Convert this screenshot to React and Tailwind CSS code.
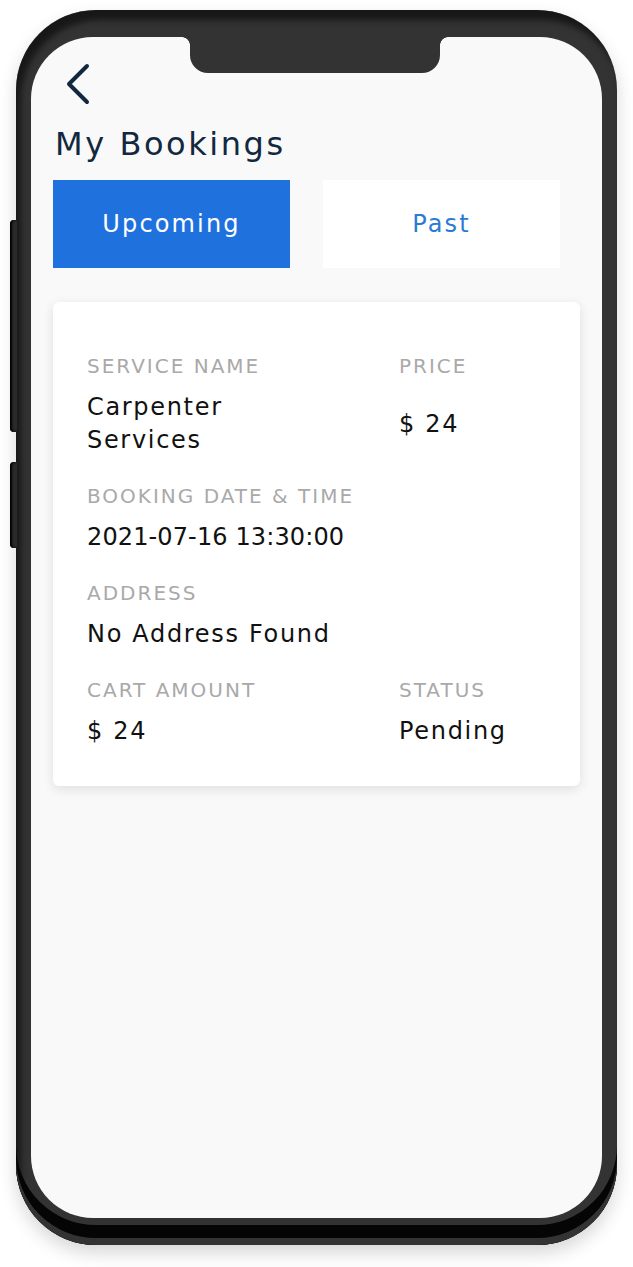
import { useState } from "react";

const font = { fontFamily: '"DejaVu Sans", "Liberation Sans", sans-serif' };

function BackIcon() {
  return (
    <svg width="26" height="42" viewBox="0 0 26 42" fill="none">
      <path
        d="M22 3 L4 21 L22 39"
        stroke="#12283f"
        strokeWidth="4"
        strokeLinecap="round"
        strokeLinejoin="round"
      />
    </svg>
  );
}

function Label({ children }) {
  return (
    <div className="text-[20px] leading-[24px] tracking-[0.1em] text-[#a9a9a9]">
      {children}
    </div>
  );
}

function Value({ children, className = "tracking-[0.07em]" }) {
  return (
    <div className={`mt-[13px] text-[24px] leading-[33px] text-[#111111] ${className}`}>
      {children}
    </div>
  );
}

export default function App() {
  const [tab, setTab] = useState("upcoming");

  const tabClass = (id) =>
    `w-[237px] h-[88px] text-[24px] tracking-[0.09em] ${
      tab === id ? "bg-[#1f72dd] text-white" : "bg-white text-[#2b7bd4]"
    }`;

  return (
    <div className="w-[633px] h-[1267px] bg-white pt-[10px] pl-[16px]" style={font}>
      <div className="relative w-[601px] h-[1235px] rounded-[80px] bg-[#333333] pt-[27px] px-[15px] shadow-[inset_0_-7px_0_#333333,inset_0_-20px_0_#050505,inset_5px_10px_6px_rgba(0,0,0,0.55),0_8px_18px_rgba(0,0,0,0.16)]">
        {/* side buttons */}
        <div className="absolute -left-[6px] top-[210px] w-[7px] h-[212px] rounded-l-[4px] bg-[#2a2a2a] shadow-[inset_2px_0_2px_#000]" />
        <div className="absolute -left-[6px] top-[452px] w-[7px] h-[86px] rounded-l-[4px] bg-[#2a2a2a] shadow-[inset_2px_0_2px_#000]" />

        <div className="relative w-[571px] h-[1181px] rounded-[62px] bg-[#f9f9f9] overflow-hidden">
          {/* notch */}
          <div className="absolute left-[159px] top-0 w-[250px] h-[36px] rounded-b-[18px] bg-[#333333]" />
          <div className="absolute left-[151px] top-0 w-[8px] h-[8px] bg-[radial-gradient(circle_at_0_100%,transparent_7.5px,#333333_8px)]" />
          <div className="absolute left-[409px] top-0 w-[8px] h-[8px] bg-[radial-gradient(circle_at_100%_100%,transparent_7.5px,#333333_8px)]" />

          <div className="pt-[26px] pl-[34px]">
            <button className="block">
              <BackIcon />
            </button>
          </div>

          <h1 className="mt-[19px] ml-[24px] text-[32px] leading-[40px] tracking-[0.08em] text-[#12283f]">
            My Bookings
          </h1>

          <div className="mt-[16px] ml-[22px] flex gap-[33px]">
            <button onClick={() => setTab("upcoming")} className={tabClass("upcoming")}>
              Upcoming
            </button>
            <button onClick={() => setTab("past")} className={tabClass("past")}>
              Past
            </button>
          </div>

          <div className="mt-[34px] mx-[22px] rounded-[6px] bg-white pt-[52px] pb-[38px] pl-[34px] shadow-[0_3px_12px_rgba(0,0,0,0.11)]">
            <div className="grid grid-cols-[312px_1fr]">
              <Label>SERVICE NAME</Label>
              <Label>PRICE</Label>
              <Value className="w-[220px] tracking-[0.07em]">Carpenter Services</Value>
              <Value className="self-center tracking-[0.07em]">$ 24</Value>
            </div>

            <div className="mt-[27px]">
              <Label>BOOKING DATE &amp; TIME</Label>
              <Value className="tracking-[0.005em]">2021-07-16 13:30:00</Value>
            </div>

            <div className="mt-[27px]">
              <Label>ADDRESS</Label>
              <Value>No Address Found</Value>
            </div>

            <div className="mt-[27px] grid grid-cols-[312px_1fr]">
              <Label>CART AMOUNT</Label>
              <Label>STATUS</Label>
              <Value>$ 24</Value>
              <Value>Pending</Value>
            </div>
          </div>
        </div>
      </div>
    </div>
  );
}
